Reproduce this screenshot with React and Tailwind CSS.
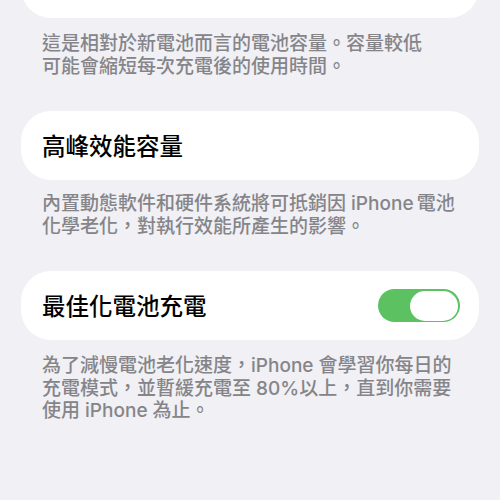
import React from 'react';

const font = { fontFamily: '"Inter", "Noto Sans CJK TC", sans-serif' };

function Card({ children }) {
  return (
    <div className="flex h-[69px] items-center justify-between rounded-[30px] bg-white pl-[21px] pr-[19px]">
      {children}
    </div>
  );
}

function Note({ lines }) {
  return (
    <div className="px-[21px] text-[19px] font-medium leading-[22.5px] text-[#858589]">
      {lines.map((l) => (
        <div key={l} className="whitespace-nowrap">{l}</div>
      ))}
    </div>
  );
}

function Toggle() {
  return (
    <div className="flex h-[33px] w-[82px] items-center justify-end rounded-full bg-[#5bc161] pr-[2px]">
      <div className="h-[30px] w-[48px] rounded-full bg-white"></div>
    </div>
  );
}

export default function App() {
  return (
    <div
      style={font}
      className="flex h-[500px] w-[500px] flex-col overflow-hidden bg-[#f0f0f5] px-[21px]"
    >
      {/* top card, scrolled mostly out of view */}
      <div className="-mt-[51px] h-[69px] rounded-[30px] bg-white"></div>

      <div className="mt-[15px]">
        <Note
          lines={[
            '這是相對於新電池而言的電池容量。容量較低',
            '可能會縮短每次充電後的使用時間。',
          ]}
        />
      </div>

      <div className="mt-[33px]">
        <Card>
          <span className="pt-[3px] text-[23.5px] font-medium text-black">高峰效能容量</span>
        </Card>
      </div>

      <div className="mt-[13px]">
        <Note
          lines={[
            '內置動態軟件和硬件系統將可抵銷因 iPhone\u2009電池',
            '化學老化，對執行效能所產生的影響。',
          ]}
        />
      </div>

      <div className="mt-[33px]">
        <Card>
          <span className="pt-[3px] text-[23.5px] font-medium text-black">最佳化電池充電</span>
          <Toggle />
        </Card>
      </div>

      <div className="mt-[15px]">
        <Note
          lines={[
            '為了減慢電池老化速度，iPhone 會學習你每日的',
            '充電模式，並暫緩充電至 80%以上，直到你需要',
            '使用 iPhone 為止。',
          ]}
        />
      </div>
    </div>
  );
}
